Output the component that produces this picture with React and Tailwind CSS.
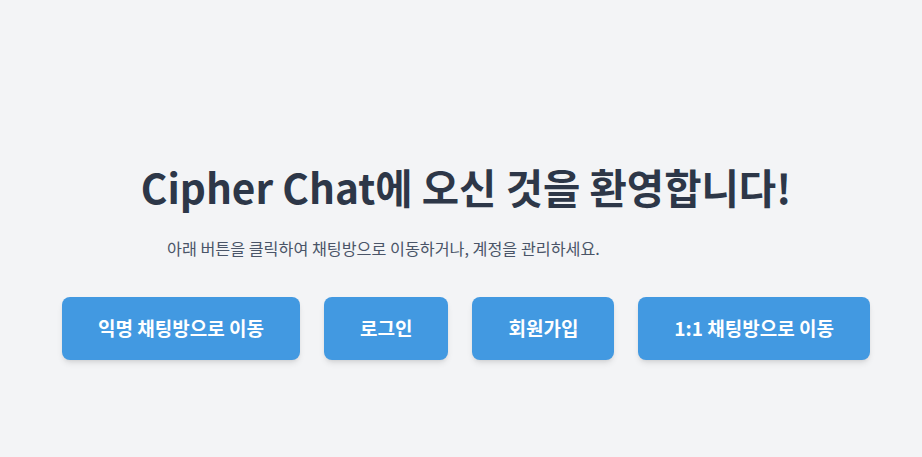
const buttons = [
  { label: "익명 채팅방으로 이동" },
  { label: "로그인" },
  { label: "회원가입" },
  { label: "1:1 채팅방으로 이동" },
];

const App = () => {
  return (
    <div
      className="min-h-screen bg-[#f3f4f6] pt-[156px]"
      style={{ fontFamily: '"Noto Sans CJK KR", "Noto Sans", sans-serif' }}
    >
      <div className="flex flex-col items-center pl-[10px]">
        <h1 className="text-[40.6px] leading-[62px] font-bold text-[#2d3748]">
          Cipher Chat에 오신 것을 환영합니다!
        </h1>
        <p className="mt-[18px] self-start pl-[157px] text-[16.2px] leading-[24px] text-[#4a5568]">
          아래 버튼을 클릭하여 채팅방으로 이동하거나, 계정을 관리하세요.
        </p>
        <div className="mt-[37px] flex">
          {buttons.map((b) => (
            <button
              key={b.label}
              type="button"
              className="mx-3 h-[63px] px-[36px] rounded-lg bg-[#4299e1] text-[19px] font-bold text-white shadow-md"
            >
              {b.label}
            </button>
          ))}
        </div>
      </div>
    </div>
  );
};

export default App;
